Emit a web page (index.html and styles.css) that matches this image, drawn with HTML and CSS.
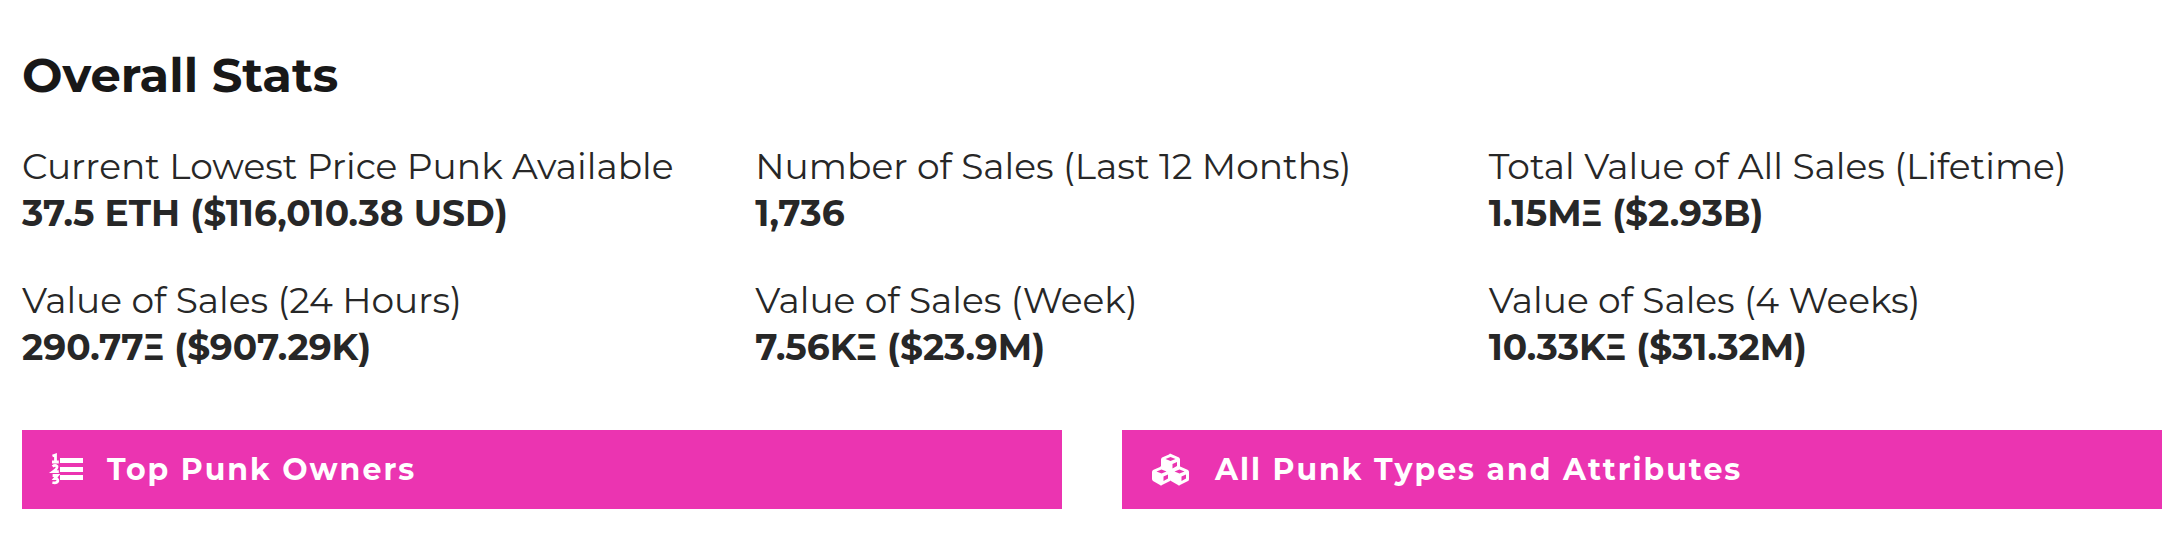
FILE: index.html
```html
<!DOCTYPE html>
<html lang="en">
<head>
    <meta charset="UTF-8">
    <meta name="viewport" content="width=device-width, initial-scale=1.0">
    <title>Overall Stats</title>
    <link rel="stylesheet" href="styles.css">
</head>
<body>

<main class="container">
    <h2>Overall Stats</h2>

    <div class="stats">
        <div class="stat">Current Lowest Price Punk Available<br><b>37.5 ETH ($116,010.38 USD)</b></div>
        <div class="stat">Number of Sales (Last 12 Months)<br><b>1,736</b></div>
        <div class="stat">Total Value of All Sales (Lifetime)<br><b>1.15MΞ ($2.93B)</b></div>
        <div class="stat">Value of Sales (24 Hours)<br><b>290.77Ξ ($907.29K)</b></div>
        <div class="stat">Value of Sales (Week)<br><b>7.56KΞ ($23.9M)</b></div>
        <div class="stat">Value of Sales (4 Weeks)<br><b>10.33KΞ ($31.32M)</b></div>
    </div>

    <div class="links">
        <a class="btn" href="#">
            <svg class="icon icon-list" viewBox="0 0 32 32" aria-hidden="true">
                <path d="M8 4h23v5H8zM8 13h23v5H8zM8 21h23v5H8z"/>
                <path class="digits" d="M.5 2L3.500 1V8M0 8h6.800M.6 12.500q2.500-2 4.300-.3q1 2-3.700 5.500h5.600M.6 21.500h4.700l-2.500 3q3.200-.2 3 2.500q-1 2.500-5.400 1.500"/>
            </svg>
            <span>Top Punk Owners</span>
        </a>
        <a class="btn" href="#">
            <svg class="icon icon-cubes" viewBox="0 0 38 32" aria-hidden="true">
                <defs>
                    <g id="cube">
                        <path d="M9 0l9 4q1 1 1 2v7q0 2-1 2l-8 4q-1 1-2 0l-7-4q-1-1-1-2V6q0-1 1-2l7-3z"/>
                        <path class="face" d="M9.500 3.500l5 2-5 2-5-2zM11.500 10.500l4.500-2v4l-4.500 2.500z"/>
                    </g>
                </defs>
                <use href="#cube" x="9" y="-.5"/>
                <use href="#cube" x="0" y="12"/>
                <use href="#cube" x="18" y="12"/>
            </svg>
            <span>All Punk Types and Attributes</span>
        </a>
    </div>
</main>

</body>
</html>
```
FILE: styles.css
```css
body {
    margin: 0;
    background-color: #fff;
    color: #272727;
    font-family: Montserrat, "Open Sans", sans-serif;
    font-size: 36px;
    font-weight: 400;
    line-height: 47px;
}
.container {
    padding: 46px 20px 24px 22px;
}
h2 {
    margin: 0 0 39px;
    color: #181818;
    font-size: 48px;
    font-weight: 700;
    line-height: 58px;
}
.stats {
    display: grid;
    grid-template-columns: repeat(3, minmax(0, 1fr));
    gap: 40px 60px;
}
.stat b {
    font-weight: 700;
}
.links {
    display: grid;
    grid-template-columns: repeat(2, minmax(0, 1fr));
    gap: 60px;
    margin-top: 59px;
}
.btn {
    display: flex;
    align-items: center;
    padding: 16px 30px;
    background-color: #eb34b1;
    color: #fff;
    font-size: 30px;
    font-weight: 700;
    letter-spacing: 2px;
    text-decoration: none;
}
.icon {
    height: 32px;
    fill: #fff;
    overflow: visible;
}
.icon-list {
    width: 32px;
    margin-right: 23px;
}
.icon-cubes {
    width: 38px;
    margin-right: 25px;
}
.digits {
    fill: none;
    stroke: #fff;
    stroke-width: 2.8;
}
.face {
    fill: #eb34b1;
}
```
